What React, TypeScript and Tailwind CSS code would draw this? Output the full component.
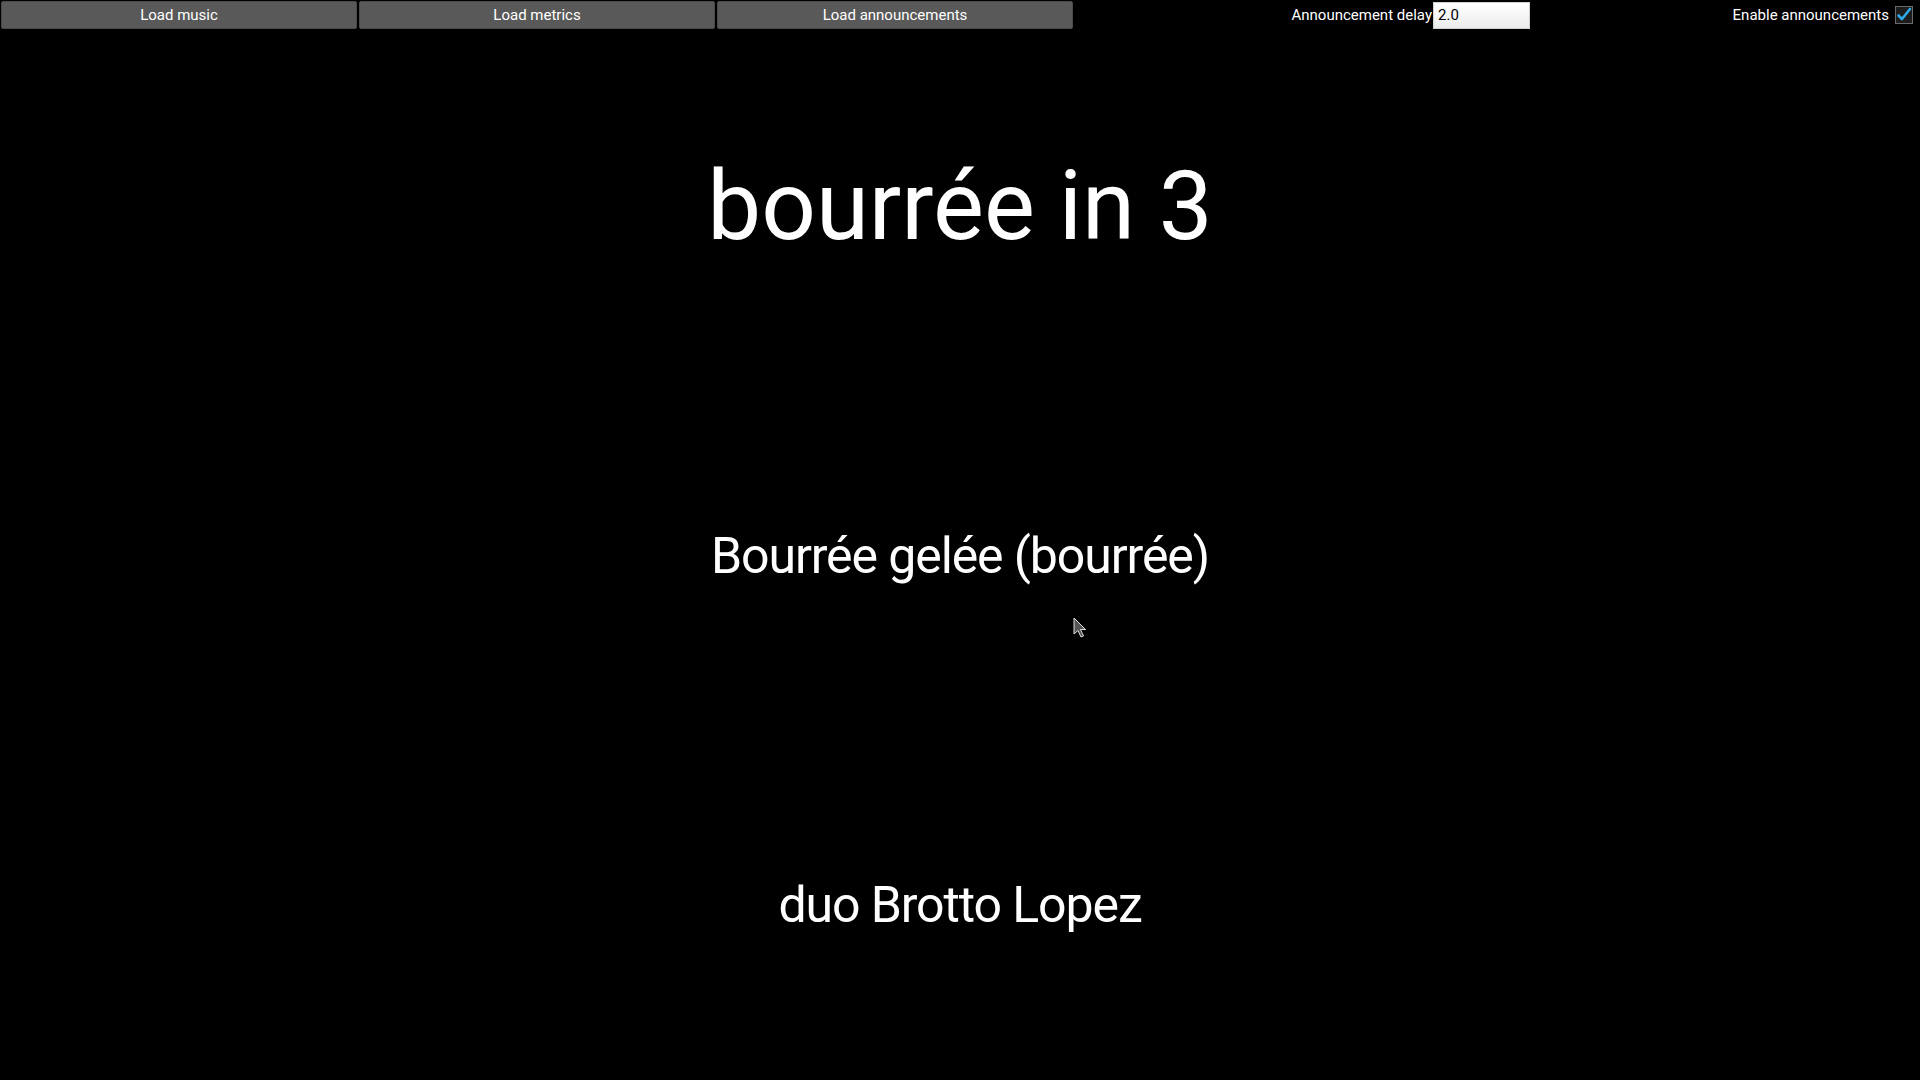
import React from "react";

const buttons = ["Load music", "Load metrics", "Load announcements"];

const App: React.FC = () => {
  return (
    <div className="relative w-[1920px] h-[1080px] bg-black text-white overflow-hidden font-['Roboto',sans-serif]">
      {/* Top bar */}
      <div className="flex h-[30px] items-start pl-px pt-px">
        <div className="flex gap-[2px]">
          {buttons.map((b) => (
            <button
              key={b}
              className="w-[356px] h-[28px] bg-[#595959] border border-[#4a4a4a] rounded-[2px] text-[15px] text-white leading-none"
            >
              {b}
            </button>
          ))}
        </div>
        <div className="flex-1 flex justify-end items-center h-[28px]">
          <span className="text-[15px] leading-none">Announcement delay</span>
          <input
            defaultValue="2.0"
            className="w-[97px] h-[27px] ml-px bg-gradient-to-b from-[#ffffff] to-[#ececec] text-black text-[15px] px-[4px] outline-none border border-[#d0d0d0]"
          />
        </div>
        <div className="w-[390px] flex justify-end items-center h-[28px] pr-[7px]">
          <span className="text-[15px] leading-none">Enable announcements</span>
          <svg width="18" height="18" viewBox="0 0 18 18" className="ml-[6px]">
            <rect x="0.5" y="0.5" width="17" height="17" fill="#1c1c1c" stroke="#6a6a6a" />
            <path d="M3.5 9.5 L7 13 L15 3" fill="none" stroke="#2ea8e6" strokeWidth="2.6" strokeLinecap="round" strokeLinejoin="round" />
          </svg>
        </div>
      </div>

      {/* Announcement rows */}
      <div className="flex flex-col h-[1050px]">
        <div className="flex-1 flex items-center justify-center">
          <h1 className="text-[96px] leading-none pt-[2px]">bourrée in 3</h1>
        </div>
        <div className="flex-1 flex items-center justify-center">
          <p className="text-[50px] leading-none tracking-[-1.1px] pt-[2px]">Bourrée gelée (bourrée)</p>
        </div>
        <div className="flex-1 flex items-center justify-center">
          <p className="text-[50px] leading-none tracking-[-1.1px]">duo Brotto Lopez</p>
        </div>
      </div>

      {/* Mouse pointer */}
      <svg width="14" height="22" viewBox="0 0 14 22" className="absolute left-[1073px] top-[617px]">
        <path d="M1 1 L1 17 L5 13.5 L8 20 L10.5 19 L7.5 12.5 L12.5 12.5 Z" fill="#555" stroke="#ddd" strokeWidth="1" />
      </svg>
    </div>
  );
};

export default App;
